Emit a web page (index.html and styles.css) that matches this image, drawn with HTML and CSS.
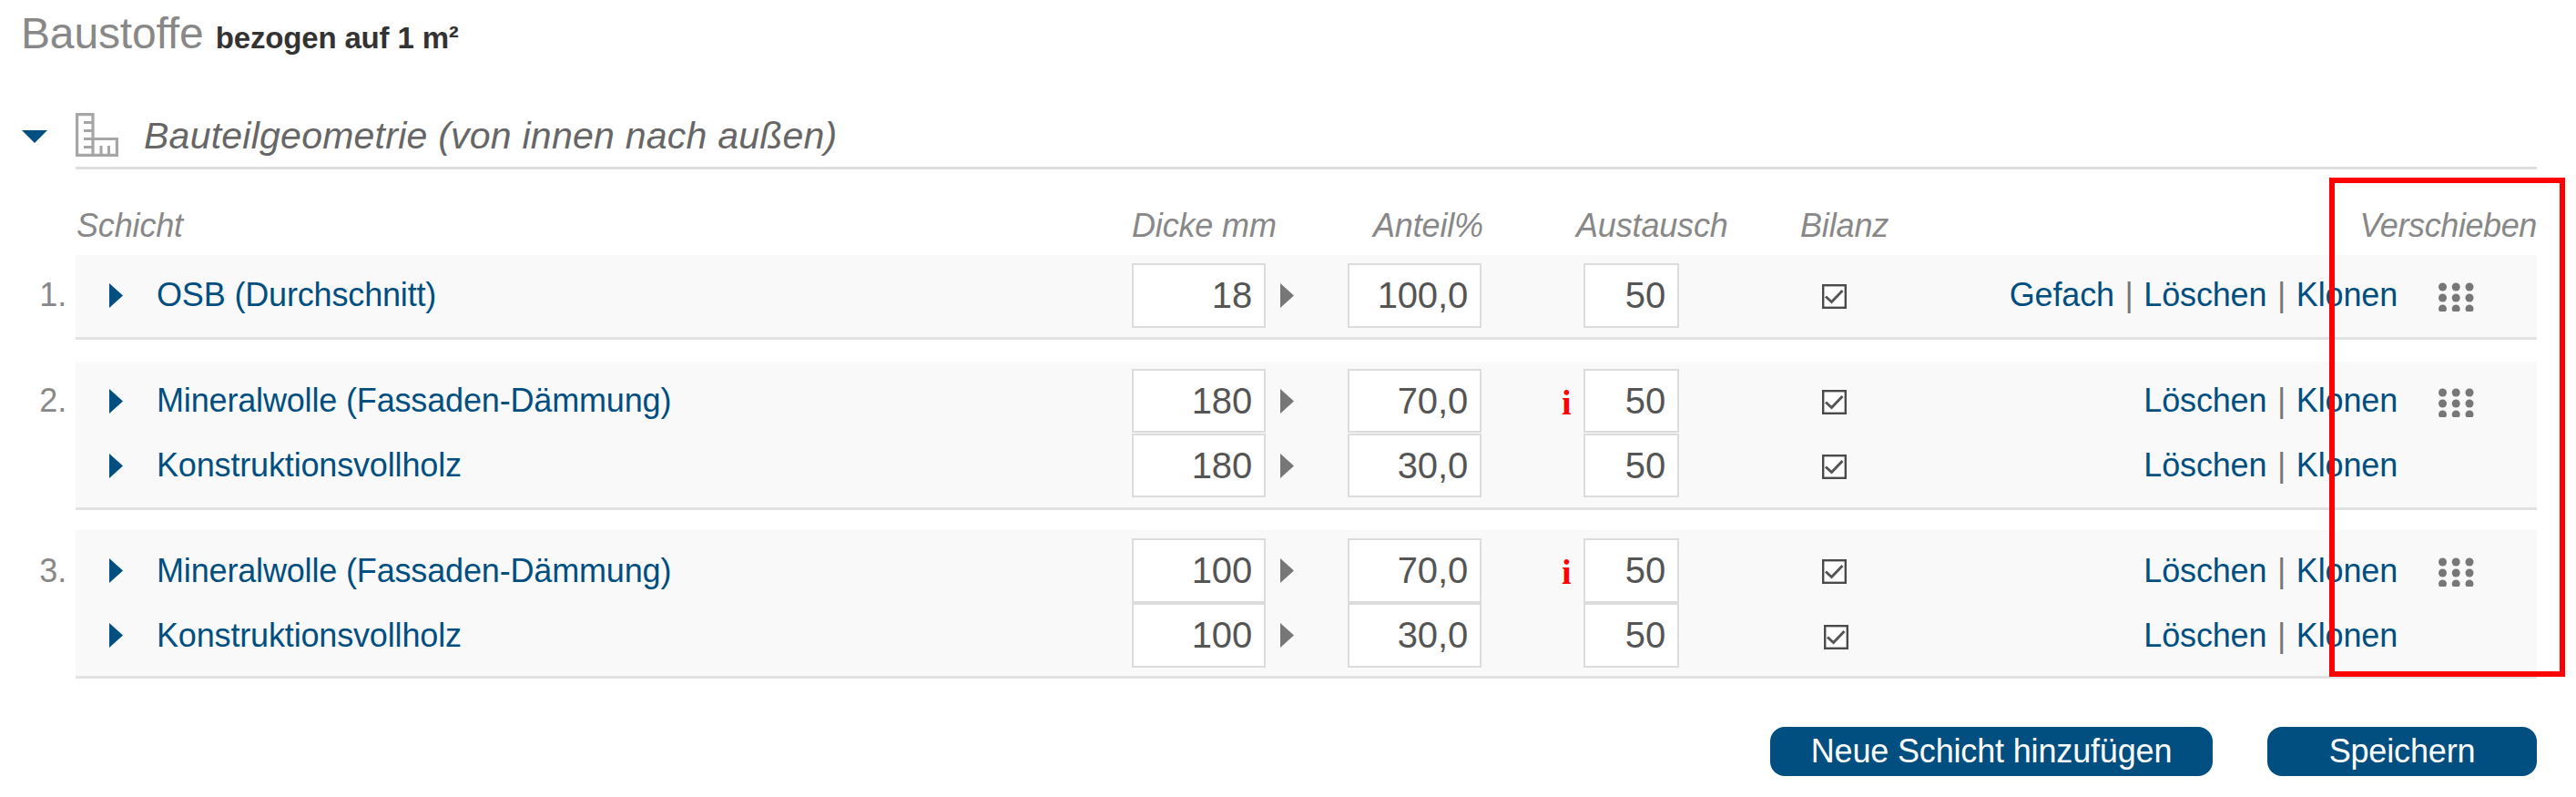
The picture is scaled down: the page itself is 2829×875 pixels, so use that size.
FILE: index.html
```html
<!DOCTYPE html>
<html lang="de">
<head>
<meta charset="utf-8">
<title>Baustoffe</title>
<link rel="stylesheet" href="styles.css">
</head>
<body>
<svg class="defs" width="0" height="0">
  <symbol id="check" viewBox="0 0 27 27"><rect x="1.2" y="1.2" width="24.6" height="24.6" fill="#fff" stroke="#4a4a4a" stroke-width="2.4"/><path d="M4 13.5 10.500 19.500 22.500 7" fill="none" stroke="#555" stroke-width="3"/></symbol>
  <symbol id="right" viewBox="0 0 15 27"><path d="M0 0 15 13.5 0 27Z" fill="currentColor"/></symbol>
  <symbol id="grip" viewBox="0 0 40 32"><g fill="#777"><circle cx="5.5" cy="5" r="4.5"/><circle cx="20.2" cy="5" r="4.5"/><circle cx="35" cy="5" r="4.5"/><circle cx="5.5" cy="17" r="4.5"/><circle cx="20.2" cy="17" r="4.5"/><circle cx="35" cy="17" r="4.5"/><circle cx="5.5" cy="29" r="4.5"/><circle cx="20.2" cy="29" r="4.5"/><circle cx="35" cy="29" r="4.5"/></g></symbol>
</svg>
<main class="page">
  <h1 class="title">Baustoffe <small class="unit">bezogen auf 1 m²</small></h1>

  <section class="geometry">
    <header class="section-head">
      <svg class="toggle" viewBox="0 0 28 14"><path d="M0 0H28L14 14Z" fill="#004f80"/></svg>
      <div class="section-title">
        <svg class="ruler" viewBox="0 0 47 48"><g fill="none" stroke="#a6a6a6" stroke-width="3.2"><path d="M1.600 1.600H19V46.400H1.600ZM19 28.500H45.400V46.400H19"/><path d="M9 10.500H19M9 19.500H19M9 28.500H19M9 37.500H19M28 46V36M36.500 46V36" stroke-width="3"/></g></svg>
        <h2 class="section-text">Bauteilgeometrie (von innen nach außen)</h2>
      </div>
    </header>

    <div class="columns">
      <span>Schicht</span><span>Dicke mm</span><span class="h-share">Anteil%</span><span class="h-life">Austausch</span><span class="h-balance">Bilanz</span><span class="h-move">Verschieben</span>
    </div>

    <ol class="layers">
      <li class="item">
        <span class="num">1.</span>
        <div class="layer">
          <div class="row">
            <a class="name"><svg class="tri"><use href="#right"/></svg><span>OSB (Durchschnitt)</span></a>
            <div class="cell"><span class="field">18</span><svg class="tri step"><use href="#right"/></svg></div>
            <div class="cell"><span class="field">100,0</span></div>
            <div class="cell"><span class="info"></span><span class="field short">50</span></div>
            <svg class="box"><use href="#check"/></svg>
            <div class="actions"><a>Gefach</a><i class="sep">|</i><a>Löschen</a><i class="sep">|</i><a>Klonen</a></div>
            <svg class="grip"><use href="#grip"/></svg>
          </div>
        </div>
      </li>
      <li class="item second">
        <span class="num">2.</span>
        <div class="layer">
          <div class="row">
            <a class="name"><svg class="tri"><use href="#right"/></svg><span>Mineralwolle (Fassaden-Dämmung)</span></a>
            <div class="cell"><span class="field">180</span><svg class="tri step"><use href="#right"/></svg></div>
            <div class="cell"><span class="field">70,0</span></div>
            <div class="cell"><span class="info">i</span><span class="field short">50</span></div>
            <svg class="box"><use href="#check"/></svg>
            <div class="actions"><a>Löschen</a><i class="sep">|</i><a>Klonen</a></div>
            <svg class="grip"><use href="#grip"/></svg>
          </div>
          <div class="row">
            <a class="name"><svg class="tri"><use href="#right"/></svg><span>Konstruktionsvollholz</span></a>
            <div class="cell"><span class="field">180</span><svg class="tri step"><use href="#right"/></svg></div>
            <div class="cell"><span class="field">30,0</span></div>
            <div class="cell"><span class="info"></span><span class="field short">50</span></div>
            <svg class="box"><use href="#check"/></svg>
            <div class="actions"><a>Löschen</a><i class="sep">|</i><a>Klonen</a></div>
          </div>
        </div>
      </li>
      <li class="item third">
        <span class="num">3.</span>
        <div class="layer">
          <div class="row">
            <a class="name"><svg class="tri"><use href="#right"/></svg><span>Mineralwolle (Fassaden-Dämmung)</span></a>
            <div class="cell"><span class="field">100</span><svg class="tri step"><use href="#right"/></svg></div>
            <div class="cell"><span class="field">70,0</span></div>
            <div class="cell"><span class="info">i</span><span class="field short">50</span></div>
            <svg class="box"><use href="#check"/></svg>
            <div class="actions"><a>Löschen</a><i class="sep">|</i><a>Klonen</a></div>
            <svg class="grip"><use href="#grip"/></svg>
          </div>
          <div class="row">
            <a class="name"><svg class="tri"><use href="#right"/></svg><span>Konstruktionsvollholz</span></a>
            <div class="cell"><span class="field">100</span><svg class="tri step"><use href="#right"/></svg></div>
            <div class="cell"><span class="field">30,0</span></div>
            <div class="cell"><span class="info"></span><span class="field short">50</span></div>
            <svg class="box last"><use href="#check"/></svg>
            <div class="actions"><a>Löschen</a><i class="sep">|</i><a>Klonen</a></div>
          </div>
        </div>
      </li>
    </ol>
  </section>

  <footer class="buttons">
    <button class="btn add">Neue Schicht hinzufügen</button>
    <button class="btn save">Speichern</button>
  </footer>
  <div class="highlight"></div>
</main>
</body>
</html>
```
FILE: styles.css
```css
* { box-sizing: border-box; }
body { margin: 0; background: #fff; }
.defs { display: block; height: 0; }
.page {
  position: relative;
  width: 2829px;
  height: 875px;
  padding: 0 43px 0 0;
  overflow: hidden;
  font: 36px "Liberation Sans", Arial, sans-serif;
  letter-spacing: -0.16px;
  color: #888;
}
.title {
  margin: 0;
  height: 124px;
  padding: 9px 0 0 23px;
  font-size: 48px;
  font-weight: 400;
  line-height: 55px;
  white-space: nowrap;
}
.unit { font-size: 33px; font-weight: 700; color: #333; }
.section-head { display: flex; height: 62px; }
.toggle { width: 28px; height: 14px; margin: 19px 31px 0 24px; }
.section-title {
  display: flex;
  flex: 1;
  border-bottom: 3px solid #dedede;
}
.ruler { width: 47px; height: 48px; }
.section-text {
  margin: 2px 0 0 28px;
  font-size: 41px;
  font-weight: 400;
  font-style: italic;
  line-height: 46px;
  letter-spacing: 0.24px;
  color: #666;
}
.columns, .row {
  display: grid;
  grid-template-columns: 1160px 237px 222px 299px 129px 503px 1fr;
}
.columns {
  height: 94px;
  margin-left: 83px;
  padding-top: 41px;
  font-style: italic;
  line-height: 41px;
  white-space: nowrap;
}
.columns span:first-child { padding-left: 1px; }
.h-share { padding-left: 28px; }
.h-life { padding-left: 29px; }
.h-balance { margin-left: -24px; }
.h-move { grid-column: 6 / 8; letter-spacing: -0.4px; text-align: right; }
.layers { margin: 0; padding: 0; list-style: none; }
.item { display: flex; margin-bottom: 24px; line-height: 69px; }
.num { width: 83px; padding: 9px 10px 0 0; text-align: right; }
.layer {
  flex: 1;
  padding: 9px 0 10px;
  background: #f9f9f9;
  border-bottom: 3px solid #e2e2e2;
}
.second { margin-bottom: 22px; }
.second .num, .second .layer { padding-top: 8px; }
.third { line-height: 71px; }
.third .layer { padding-bottom: 9px; }
.row { height: 71px; }
.name { display: flex; padding-left: 37px; color: #004f80; white-space: nowrap; }
.name span { margin-left: 37px; }
.tri { width: 15px; height: 27px; margin-top: 22px; }
.step { margin-left: 16px; color: #777; }
.cell { display: flex; }
.field {
  width: 147px;
  height: 71px;
  padding-right: 13px;
  background: #fff;
  border: 2px solid #dcdcdc;
  font-size: 40px;
  line-height: 66px;
  text-align: right;
  color: #555;
}
.second .field { height: 70px; }
.short { width: 105px; }
.info {
  width: 37px;
  padding-left: 13px;
  font: 700 38px/74px "Liberation Serif", "Times New Roman", serif;
  color: #f00;
}
.box { width: 27px; height: 27px; margin-top: 23px; }
.last { margin: 24px 0 0 2px; }
.actions { display: flex; justify-content: flex-end; color: #004f80; }
.sep { width: 32.5px; text-align: center; font-style: normal; color: #777; }
.grip { width: 40px; height: 32px; margin: 21px 0 0 44px; }
.buttons { display: flex; justify-content: flex-end; gap: 60px; margin-top: 53px; }
.btn {
  height: 54px;
  padding: 0;
  border: 0;
  border-radius: 16px;
  background: #004f80;
  color: #fff;
  font: 36px/50px "Liberation Sans", Arial, sans-serif;
  letter-spacing: -0.16px;
}
.add { width: 486px; }
.save { width: 296px; }
.highlight {
  position: absolute;
  left: 2558px;
  top: 195px;
  width: 259px;
  height: 548px;
  border: 6px solid #f00;
}
```
